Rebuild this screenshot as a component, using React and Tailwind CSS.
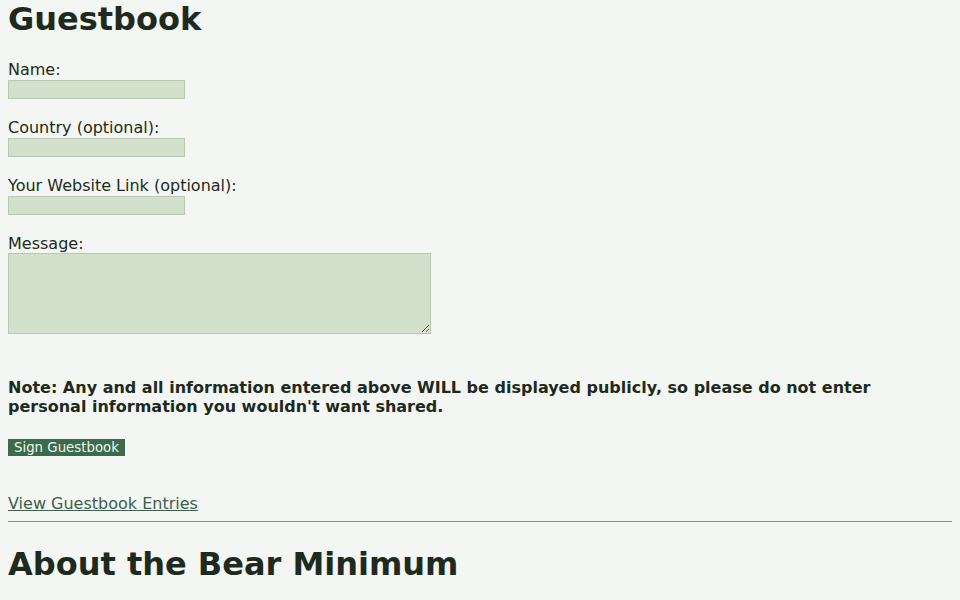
export default function App() {
  const fields = [
    { label: 'Name:', name: 'name' },
    { label: 'Country (optional):', name: 'country' },
    { label: 'Your Website Link (optional):', name: 'website' },
  ];

  return (
    <div
      className="min-h-screen bg-[#f3f6f2] px-2 text-[16px] text-[#1e2a20]"
      style={{ fontFamily: '"DejaVu Sans", sans-serif' }}
    >
      <h1 className="pt-[1px] text-[32px] font-bold leading-[37px] mb-[21px]">Guestbook</h1>

      <form onSubmit={(e) => e.preventDefault()}>
        {fields.map((f) => (
          <div key={f.name} className="mb-[18px]">
            <label className="block pt-[1px] leading-[19px]">{f.label}</label>
            <input
              type="text"
              name={f.name}
              className="mt-[1px] block h-[19px] w-[177px] border border-[#b8c8b2] bg-[#d3e1cc] px-1 text-[13px] outline-none"
            />
          </div>
        ))}

        <div>
          <label className="block pt-[1px] leading-[19px]">Message:</label>
          <textarea
            name="message"
            className="block h-[81px] w-[423px] border border-[#b8c8b2] bg-[#d3e1cc] p-1 text-[13px] outline-none"
          />
        </div>

        <p className="mt-[44px] font-bold leading-[19px]">
          Note: Any and all information entered above WILL be displayed publicly, so please do not enter personal information you wouldn't want shared.
        </p>

        <button
          type="submit"
          className="mt-[23px] block h-[17px] bg-[#3b6a4c] px-[6px] text-[13.33px] leading-[17px] text-[#f0f5ef]"
        >
          Sign Guestbook
        </button>
      </form>

      <a href="#" className="mt-[38px] block w-fit leading-[19px] text-[#3d5e4d] underline">
        View Guestbook Entries
      </a>

      <hr className="mt-[8px] border-t border-[#8c918c]" />

      <h2 className="mt-[24px] text-[32px] font-bold leading-[37px]">About the Bear Minimum</h2>
    </div>
  );
}
